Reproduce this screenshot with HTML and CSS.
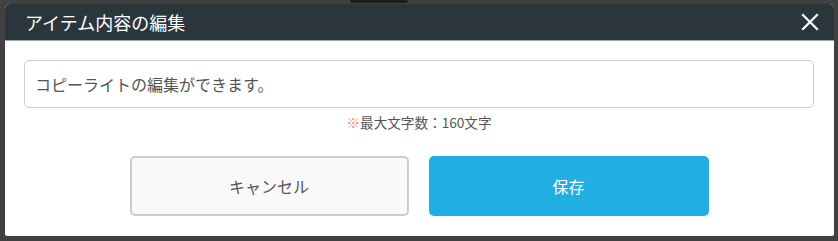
FILE: index.html
```html
<!DOCTYPE html>
<html lang="ja">
<head>
<meta charset="utf-8">
<link rel="stylesheet" href="styles.css">
</head>
<body>
<div class="backdrop-tab"></div>
<div class="dialog">
  <div class="dialog-header">
    <span class="dialog-title">アイテム内容の編集</span>
    <button class="close-btn" aria-label="閉じる">
      <svg width="18" height="18" viewBox="0 0 18 18"><path d="M2 2 L16 16 M16 2 L2 16" stroke="#fff" stroke-width="2.2" stroke-linecap="square"/></svg>
    </button>
  </div>
  <div class="dialog-body">
    <input class="text-input" type="text" value="コピーライトの編集ができます。">
    <p class="hint"><span class="mark">※</span>最大文字数：160文字</p>
    <div class="actions">
      <button class="btn btn-cancel">キャンセル</button>
      <button class="btn btn-save">保存</button>
    </div>
  </div>
</div>
</body>
</html>
```
FILE: styles.css
```css
html, body {
  margin: 0;
  padding: 0;
}
body {
  background: #414141;
  width: 838px;
  height: 241px;
  overflow: hidden;
  position: relative;
  font-family: "Noto Sans CJK JP", "Noto Sans", sans-serif;
  padding: 4px 0 0 5px;
  box-sizing: border-box;
}
.backdrop-tab {
  position: absolute;
  left: 350px;
  top: 0;
  width: 58px;
  height: 3px;
  background: #1e1e1e;
  border-radius: 0 0 4px 4px;
}
.dialog {
  width: 829px;
  height: 232px;
  background: #fff;
  border-radius: 5px 5px 2px 2px;
  overflow: hidden;
  display: flex;
  flex-direction: column;
}
.dialog-header {
  height: 36px;
  background: #2b363c;
  border-bottom: 1px solid #9aa9ab;
  display: flex;
  align-items: center;
  justify-content: space-between;
  padding: 0 15px 0 20px;
  flex-shrink: 0;
}
.dialog-title {
  color: #fff;
  font-size: 18px;
  line-height: 1;
}
.close-btn {
  background: none;
  border: none;
  padding: 0;
  width: 18px;
  height: 18px;
  display: flex;
}
.dialog-body {
  padding: 19px 20px 0 19px;
  display: flex;
  flex-direction: column;
}
.text-input {
  box-sizing: border-box;
  width: 790px;
  height: 48px;
  border: 1px solid #cccccc;
  border-radius: 5px;
  padding: 0 10px;
  font-family: inherit;
  font-size: 16px;
  color: #555;
  outline: none;
  background: #fff;
}
.hint {
  margin: 6px 0 0;
  text-align: center;
  font-size: 13.6px;
  line-height: 16px;
  color: #555;
}
.mark {
  color: #f28b82;
}
.actions {
  display: flex;
  justify-content: center;
  gap: 20px;
  margin-top: 26px;
}
.btn {
  box-sizing: border-box;
  width: 279px;
  height: 60px;
  border-radius: 5px;
  font-family: inherit;
  font-size: 16px;
  cursor: pointer;
}
.btn-save {
  width: 280px;
}
.btn-cancel {
  background: #f9f9f9;
  border: 2px solid #cccccc;
  color: #555;
}
.btn-save {
  background: #21aee3;
  border: none;
  color: #fff;
}
```
